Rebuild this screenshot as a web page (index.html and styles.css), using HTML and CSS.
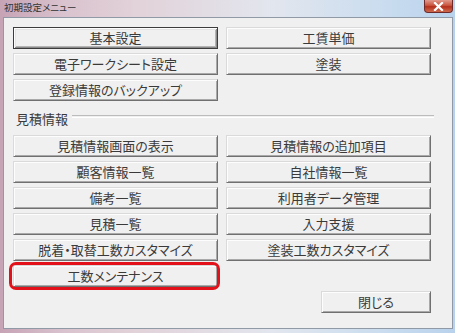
FILE: index.html
```html
<!DOCTYPE html>
<html lang="ja">
<head>
  <meta charset="UTF-8">
  <title>初期設定メニュー</title>
  <link rel="stylesheet" href="styles.css">
</head>
<body>
  <div class="window">
    <div class="titlebar">
      <span class="title">初期設定メニュー</span>
      <span class="close-btn">
        <svg width="11" height="9" viewBox="0 0 11 9">
          <path d="M2 1 L9 8 M9 1 L2 8" stroke="#fff" stroke-width="2.2" stroke-linecap="square"/>
        </svg>
      </span>
    </div>

    <div class="client">
      <div class="btn-grid">
        <button class="btn default">基本設定</button>
        <button class="btn">工賃単価</button>
        <button class="btn">電子ワークシート設定</button>
        <button class="btn">塗装</button>
        <button class="btn">登録情報のバックアップ</button>
      </div>

      <div class="group-head">
        <span class="group-label">見積情報</span>
        <span class="group-line"></span>
      </div>

      <div class="btn-grid">
        <button class="btn">見積情報画面の表示</button>
        <button class="btn">見積情報の追加項目</button>
        <button class="btn">顧客情報一覧</button>
        <button class="btn">自社情報一覧</button>
        <button class="btn">備考一覧</button>
        <button class="btn">利用者データ管理</button>
        <button class="btn">見積一覧</button>
        <button class="btn">入力支援</button>
        <button class="btn">脱着・取替工数カスタマイズ</button>
        <button class="btn">塗装工数カスタマイズ</button>
        <div class="marked">
          <button class="btn">工数メンテナンス</button>
        </div>
        <div></div>
        <div></div>
        <div class="close-row">
          <button class="btn close-action">閉じる</button>
        </div>
      </div>
    </div>
  </div>
</body>
</html>
```

FILE: styles.css
```css
body {
  margin: 0;
  padding: 0;
  font-family: "Noto Sans CJK JP", "Noto Sans", sans-serif;
  font-feature-settings: "palt";
}

.window {
  width: 455px;
  height: 333px;
  display: flex;
  flex-direction: column;
  background: linear-gradient(90deg, #c6a3b5 0%, #d9c3ce 14%, #e2d2d9 30%, #e2e6ee 60%, #c9dcef 85%, #b9d2ec 100%);
}

.titlebar {
  height: 17px;
  display: flex;
  align-items: flex-start;
  padding-left: 4px;
}

.title {
  font-size: 9.5px;
  line-height: 15px;
  color: #333;
}

.close-btn {
  margin-left: auto;
  margin-right: 2px;
  width: 29px;
  height: 13px;
  box-sizing: border-box;
  border: 1px solid #6d2a2a;
  border-top: none;
  border-radius: 0 0 4px 4px;
  background: linear-gradient(#e09a8e, #c9553f 45%, #b5301c 55%, #cf6a4e);
  display: flex;
  align-items: center;
  justify-content: center;
}

.client {
  flex: 1;
  margin: 0 2px 4px 3px;
  border: 1px solid #8f9aa6;
  background: #f0f0f0;
  padding: 9px 0 0 9px;
}

.btn-grid {
  display: grid;
  grid-template-columns: 205px 205px;
  grid-auto-rows: 22px;
  gap: 4px 8px;
}

.btn {
  height: 22px;
  box-sizing: border-box;
  padding: 0;
  font-family: inherit;
  font-feature-settings: "palt";
  font-size: 13px;
  line-height: 18px;
  color: #3a3a3a;
  background: #f0f0f0;
  border: 1px solid;
  border-color: #dadada #707070 #707070 #dadada;
  box-shadow: inset 1px 1px #fdfdfd, inset -1px -1px #a9a9a9;
}

.btn.default {
  border-color: #3c3c3c;
  box-shadow: inset 1px 1px #fdfdfd, inset -1px -1px #8a8a8a, inset 2px 2px #e4e4e4, inset -2px -2px #b4b4b4;
}

.group-head {
  height: 34px;
  display: flex;
  align-items: center;
  padding-left: 3px;
  width: 418px;
}

.group-label {
  font-size: 13px;
  color: #3a3a3a;
  margin-right: 4px;
}

.group-line {
  flex: 1;
  height: 1px;
  border-top: 1px solid #bcbcbc;
  border-bottom: 1px solid #fff;
  margin-bottom: 3px;
}

.marked {
  position: relative;
  display: flex;
}

.marked .btn {
  flex: 1;
}

.marked::after {
  content: "";
  position: absolute;
  top: -3px;
  bottom: -3px;
  left: -4px;
  right: -2px;
  border: 3px solid #e3121a;
  border-radius: 7px;
  pointer-events: none;
}

.close-row {
  display: flex;
  justify-content: flex-end;
}

.close-action {
  width: 110px;
}
```
